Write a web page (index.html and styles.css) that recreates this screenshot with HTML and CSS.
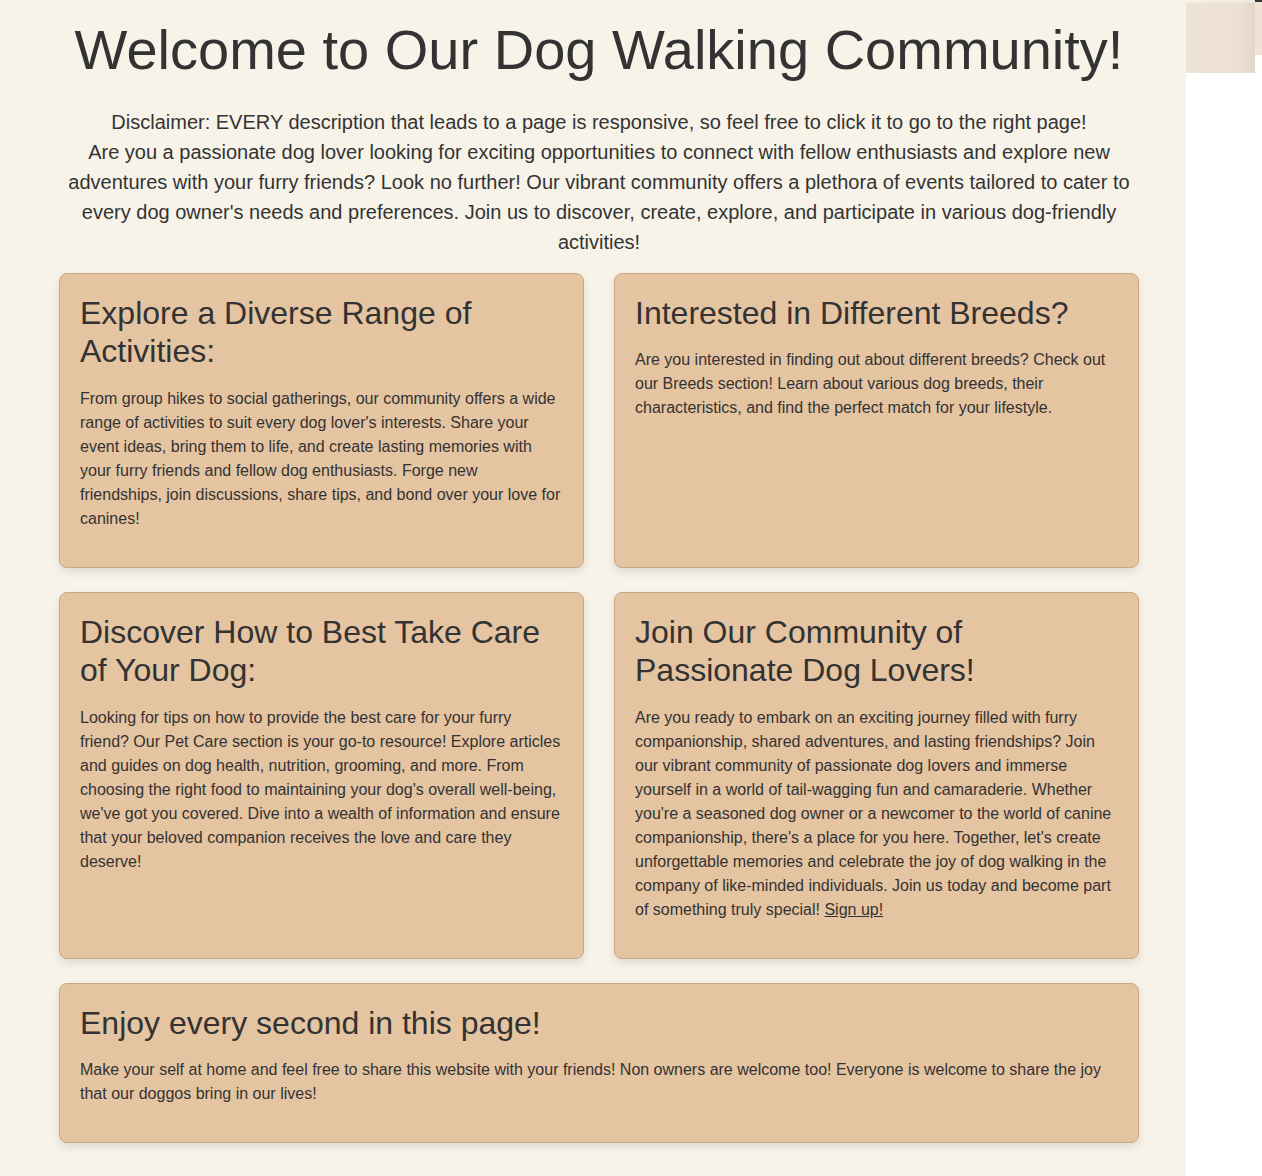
FILE: index.html
```html
<!DOCTYPE html>
<html lang="en">
<head>
<meta charset="utf-8">
<title>Dog Walking Community</title>
<link rel="stylesheet" href="styles.css">
</head>
<body>
<main class="page">
  <div class="container">
    <h1 class="title">Welcome to Our Dog Walking Community!</h1>
    <p class="intro">Disclaimer: EVERY description that leads to a page is responsive, so feel free to click it to go to the right page!<br>Are you a passionate dog lover looking for exciting opportunities to connect with fellow enthusiasts and explore new adventures with your furry friends? Look no further! Our vibrant community offers a plethora of events tailored to cater to every dog owner's needs and preferences. Join us to discover, create, explore, and participate in various dog-friendly activities!</p>
    <div class="grid">
      <section class="card">
        <h2>Explore a Diverse Range of Activities:</h2>
        <p>From group hikes to social gatherings, our community offers a wide range of activities to suit every dog lover's interests. Share your event ideas, bring them to life, and create lasting memories with your furry friends and fellow dog enthusiasts. Forge new friendships, join discussions, share tips, and bond over your love for canines!</p>
      </section>
      <section class="card">
        <h2>Interested in Different Breeds?</h2>
        <p>Are you interested in finding out about different breeds? Check out our Breeds section! Learn about various dog breeds, their characteristics, and find the perfect match for your lifestyle.</p>
      </section>
      <section class="card">
        <h2>Discover How to Best Take Care of Your Dog:</h2>
        <p>Looking for tips on how to provide the best care for your furry friend? Our Pet Care section is your go-to resource! Explore articles and guides on dog health, nutrition, grooming, and more. From choosing the right food to maintaining your dog's overall well-being, we've got you covered. Dive into a wealth of information and ensure that your beloved companion receives the love and care they deserve!</p>
      </section>
      <section class="card">
        <h2>Join Our Community of Passionate Dog Lovers!</h2>
        <p>Are you ready to embark on an exciting journey filled with furry companionship, shared adventures, and lasting friendships? Join our vibrant community of passionate dog lovers and immerse yourself in a world of tail-wagging fun and camaraderie. Whether you're a seasoned dog owner or a newcomer to the world of canine companionship, there's a place for you here. Together, let's create unforgettable memories and celebrate the joy of dog walking in the company of like-minded individuals. Join us today and become part of something truly special! <a href="#" class="link">Sign up!</a></p>
      </section>
      <section class="card card-wide">
        <h2>Enjoy every second in this page!</h2>
        <p>Make your self at home and feel free to share this website with your friends! Non owners are welcome too! Everyone is welcome to share the joy that our doggos bring in our lives!</p>
      </section>
    </div>
  </div>
</main>
<div class="corner-strip"></div>
<div class="corner-box"></div>
<div class="corner-edge"></div>
</body>
</html>
```

FILE: styles.css
```css
html, body {
  margin: 0;
  padding: 0;
  background: #ffffff;
}

body {
  font-family: "Liberation Sans", Arial, sans-serif;
  color: #333333;
  position: relative;
  min-height: 1176px;
}

.page {
  width: 1186px;
  min-height: 1176px;
  box-sizing: border-box;
  background: #f7f3e9;
  padding: 18px 47px 24px 59px;
}

.container {
  width: 1080px;
}

.title {
  margin: 0;
  font-size: 56px;
  font-weight: normal;
  text-align: center;
  line-height: 64px;
}

.intro {
  margin: 25px 0 16px;
  font-size: 20px;
  line-height: 30px;
  text-align: center;
}

.grid {
  display: grid;
  grid-template-columns: 525px 525px;
  column-gap: 30px;
  row-gap: 24px;
}

.card {
  background: #e5c4a1;
  border: 1px solid #caa886;
  border-radius: 8px;
  padding: 20px;
  box-shadow: 0 4px 8px rgba(0, 0, 0, 0.1);
}

.card-wide {
  grid-column: 1 / span 2;
}

.card h2 {
  margin: 0;
  font-size: 32px;
  font-weight: normal;
  line-height: 1.2;
}

.card p {
  margin: 16px 0;
  font-size: 16px;
  line-height: 24px;
}

.link {
  color: #333333;
  text-decoration: underline;
}

.corner-strip {
  position: absolute;
  top: 0;
  left: 1186px;
  width: 69px;
  height: 3px;
  background: linear-gradient(to right, #f6f1e7, #ede6dc);
}

.corner-box {
  position: absolute;
  top: 3px;
  left: 1186px;
  width: 69px;
  height: 70px;
  background: linear-gradient(to right, #efe3d6 0%, #ece0d2 80%, #e2d6ca 100%);
}

.corner-edge {
  position: absolute;
  top: 0;
  left: 1255px;
  width: 7px;
  height: 55px;
  background: #efe3d6;
  border-top: 2px solid #333333;
  box-sizing: border-box;
}
```
